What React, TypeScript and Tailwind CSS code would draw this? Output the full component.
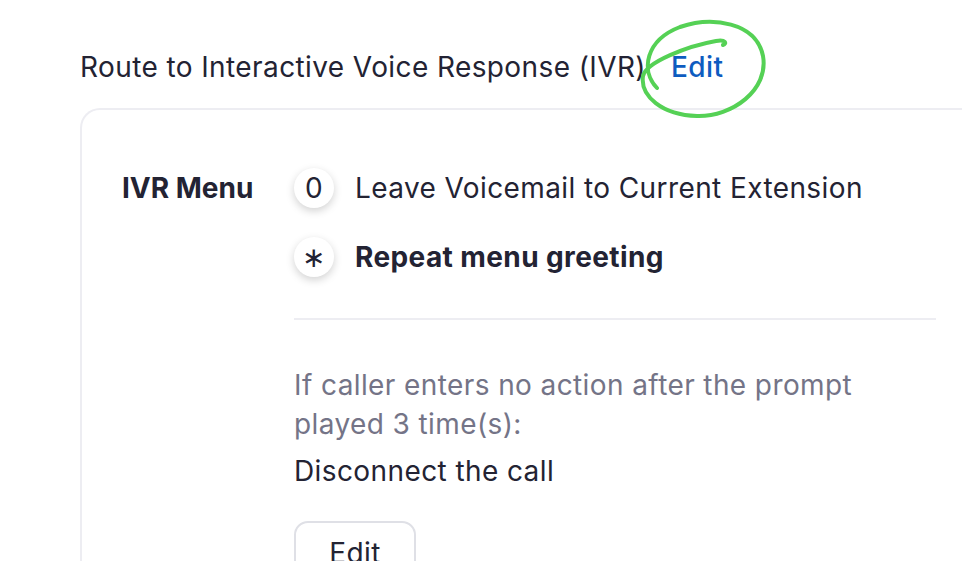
import React from 'react';

const menuItems = [
    { key: '0', label: 'Leave Voicemail to Current Extension', bold: false },
    { key: '∗', label: 'Repeat menu greeting', bold: true },
];

const App: React.FC = () => {
    return (
        <div className="relative h-[561px] w-[962px] overflow-hidden bg-white text-[#232333] tracking-[0.4px] font-['Inter',sans-serif]">
            {/* Header */}
            <div className="flex items-center pl-[80px] pt-[46px] h-[88px]">
                <span className="text-[28px] leading-[40px]">Route to Interactive Voice Response (IVR)</span>
                <a className="ml-[25px] text-[28px] leading-[40px] font-medium text-[#0e5cc0]">Edit</a>
            </div>

            {/* Card */}
            <div className="ml-[80px] mt-[20px] w-[900px] shrink-0 rounded-tl-[20px] border-l-2 border-t-2 border-[#ededf2] pl-[40px] pt-[58px]">
                <div className="flex">
                    <div className="w-[172px] shrink-0 text-[28px] font-bold leading-[40px] tracking-normal">IVR Menu</div>
                    <div className="w-[642px]">
                        <div className="flex flex-col gap-[29px]">
                            {menuItems.map((item) => (
                                <div key={item.key} className="flex items-center gap-[21px]">
                                    <div className="flex h-[40px] w-[40px] items-center justify-center rounded-full bg-white text-[28px] leading-none shadow-[0_3px_8px_rgba(0,0,0,0.18)]">
                                        {item.key}
                                    </div>
                                    <span className={`text-[28px] leading-[40px] ${item.bold ? 'font-bold' : ''}`}>{item.label}</span>
                                </div>
                            ))}
                        </div>

                        <div className="mt-[41px] h-[2px] bg-[#ededf2]" />

                        <p className="mt-[46px] text-[28px] leading-[39px] text-[#747487]">
                            If caller enters no action after the prompt
                            <br />
                            played 3 time(s):
                        </p>
                        <p className="mt-[8px] text-[28px] leading-[39px]">Disconnect the call</p>

                        <button className="mt-[30px] h-[58px] w-[122px] rounded-[14px] border-2 border-[#dfe0e6] bg-white pt-[6px] text-[28px] leading-[40px]">
                            Edit
                        </button>
                    </div>
                </div>
            </div>

            {/* Hand-drawn highlight */}
            <svg className="pointer-events-none absolute left-0 top-0" width="962" height="561" viewBox="0 0 962 561" fill="none">
                <path
                    d="M 657 88 C 640 70, 646 40, 680 27 C 712 16, 756 22, 763 56 C 769 90, 732 117, 697 116 C 662 115, 640 96, 643 76 C 646 62, 688 46, 716 41 C 726 39, 727 44, 723 45"
                    stroke="#55d155"
                    strokeWidth="4"
                    strokeLinecap="round"
                    strokeLinejoin="round"
                />
            </svg>
        </div>
    );
};

export default App;
